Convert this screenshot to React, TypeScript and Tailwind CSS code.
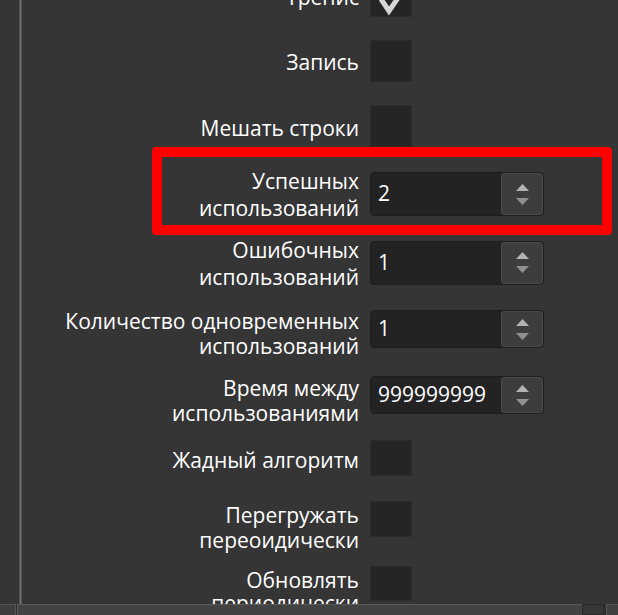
import { ReactNode } from 'react'

const font = { fontFamily: '"Open Sans", "Liberation Sans", Arial, sans-serif' }

function CheckBox({ checked = false, h = 42 }: { checked?: boolean; h?: number }) {
	return (
		<div
			className="relative w-[42px] shrink-0 border border-[#2c2c2c] bg-[#252525]"
			style={{ height: h }}
		>
			{checked && (
				<svg className="absolute inset-0" width="42" height={h} viewBox={`0 0 42 ${h}`}>
					<path d="M10 23 L18 35 L29 19" fill="none" stroke="#d6d6d6" strokeWidth="5" strokeLinejoin="miter" />
				</svg>
			)}
		</div>
	)
}

function SpinBox({ value, h = 44 }: { value: string; h?: number }) {
	return (
		<div
			className="flex w-[174px] shrink-0 overflow-hidden rounded-[4px] border border-[#1e1e1e] bg-[#232323]"
			style={{ height: h }}
		>
			<div className="flex flex-1 items-center pl-[7px] text-[21px] text-white">{value}</div>
			<div className="flex w-[42px] flex-col items-center justify-center gap-[7px] rounded-[3px] border border-[#4a4a4a] bg-[#3d3d3d]">
				<svg width="13" height="7" viewBox="0 0 13 7">
					<path d="M6.5 0 L13 7 L0 7 Z" fill="#b2b2b2" />
				</svg>
				<svg width="13" height="7" viewBox="0 0 13 7">
					<path d="M0 0 L13 0 L6.5 7 Z" fill="#909090" />
				</svg>
			</div>
		</div>
	)
}

function Row({
	label,
	h,
	children,
	shift = 0,
	lh = 27,
}: {
	label: ReactNode
	h: number
	children: ReactNode
	shift?: number
	lh?: number
}) {
	return (
		<div className="flex shrink-0 items-center" style={{ height: h }}>
			<div
				className="w-[337px] text-right text-[21px] text-white"
				style={{ transform: `translateY(${shift}px)`, lineHeight: `${lh}px` }}
			>
				{label}
			</div>
			<div className="ml-[11px]">{children}</div>
		</div>
	)
}

export default function App() {
	return (
		<div className="relative flex h-[615px] w-[618px] flex-col overflow-hidden bg-[#353535]" style={font}>
			<div className="flex min-h-0 flex-1">
				<div className="ml-[19px] flex w-[3px] shrink-0">
					<div className="w-px bg-[#4e4e4e]" />
					<div className="w-px bg-[#747474]" />
					<div className="w-px bg-[#505050]" />
				</div>
				<div className="flex min-w-0 flex-1 flex-col overflow-hidden">
					<div className="mt-[-37px] flex flex-col">
						<Row label="Тренис" h={65} shift={2}>
							<CheckBox checked />
						</Row>
						<Row label="Запись" h={65} shift={2}>
							<CheckBox />
						</Row>
						<Row label="Мешать строки" h={66} shift={2}>
							<CheckBox />
						</Row>
						<Row label={<>Успешных<br />использований</>} h={70} shift={1}>
							<SpinBox value="2" />
						</Row>
						<Row label={<>Ошибочных<br />использований</>} h={67} shift={1}>
							<SpinBox value="1" />
						</Row>
						<Row label={<>Количество одновременных<br />использований</>} h={66} shift={5} lh={25}>
							<SpinBox value="1" h={38} />
						</Row>
						<Row label={<>Время между<br />использованиями</>} h={66} shift={6} lh={25}>
							<SpinBox value="999999999" h={38} />
						</Row>
						<Row label="Жадный алгоритм" h={60} shift={2}>
							<CheckBox h={36} />
						</Row>
						<Row label={<>Перегружать<br />переоидически</>} h={62} shift={9} lh={25}>
							<CheckBox h={36} />
						</Row>
						<Row label={<>Обновлять<br />периодически</>} h={67} shift={8} lh={23}>
							<CheckBox h={35} />
						</Row>
					</div>
				</div>
			</div>
			<div className="flex h-[11px] shrink-0 bg-[#2e2e2e]">
				<div className="w-[16px] border-t border-r border-[#555] bg-[#3f3f3f]" />
				<div className="ml-px flex-1 border-t border-l border-[#5a5a5a] bg-[#434343]" />
				<div className="w-[22px] border border-[#2a2a2a] bg-[#373737]" />
				<div className="ml-[2px] w-[12px] border-t border-l border-[#555] bg-[#404040]" />
			</div>
			<div className="pointer-events-none absolute top-[147px] left-[152px] h-[88px] w-[460px] rounded-[4px] border-[10px] border-[#ff0000]" />
		</div>
	)
}
